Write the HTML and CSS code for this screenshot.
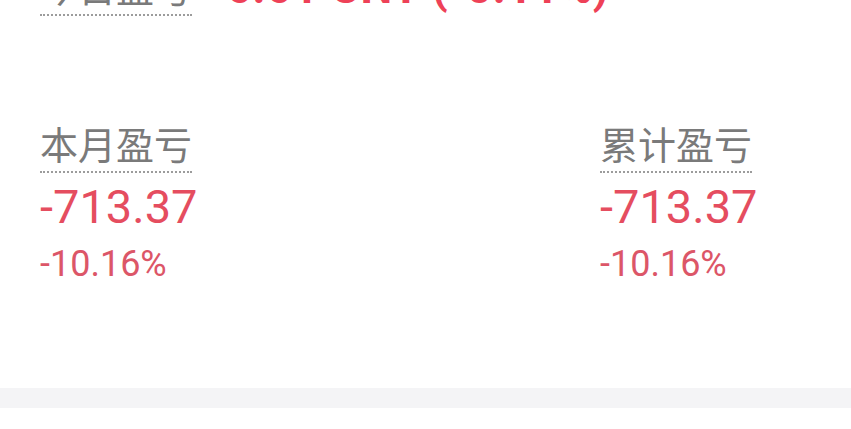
FILE: index.html
```html
<!DOCTYPE html>
<html>
<head>
    <title>盈亏</title>
    <link rel="stylesheet" href="styles.css">
</head>
<body>
    <div class="panel">
        <div class="today">
            <span class="label">今日盈亏</span>
            <span class="today-value">-6.61 CNY (-0.11%)</span>
        </div>

        <div class="stats">
            <div class="stat">
                <span class="label">本月盈亏</span>
                <div class="amount">-713.37</div>
                <div class="rate">-10.16%</div>
            </div>
            <div class="stat">
                <span class="label">累计盈亏</span>
                <div class="amount">-713.37</div>
                <div class="rate">-10.16%</div>
            </div>
        </div>
    </div>
    <div class="divider"></div>
</body>
</html>
```

FILE: styles.css
```css
body { margin: 0; background: #fff; font-family: Roboto, "Noto Sans CJK SC", sans-serif; overflow: hidden; }
.panel { padding: 0 40px; margin-top: -37px; height: 425px; box-sizing: border-box; }
.today { display: flex; align-items: flex-end; gap: 16px; }
.label { display: inline-block; font-family: "Noto Sans CJK SC", sans-serif; font-size: 38px; line-height: 46px; padding-bottom: 5px; color: #7a7a7a; border-bottom: 2px dotted #9c9c9c; }
.today-value { font-size: 45px; font-weight: bold; line-height: 46px; letter-spacing: 0.5px; color: #ee4157; margin-bottom: 5px; }
.stats { display: grid; grid-template-columns: 560px 1fr; margin-top: 104px; }
.stat { display: flex; flex-direction: column; align-items: flex-start; }
.amount { font-size: 47px; line-height: 56px; color: #e54d5f; margin-top: 6px; }
.rate { font-size: 36px; line-height: 40px; color: #dc5668; margin-top: 9px; }
.divider { height: 20px; background: #f4f4f6; }
```
